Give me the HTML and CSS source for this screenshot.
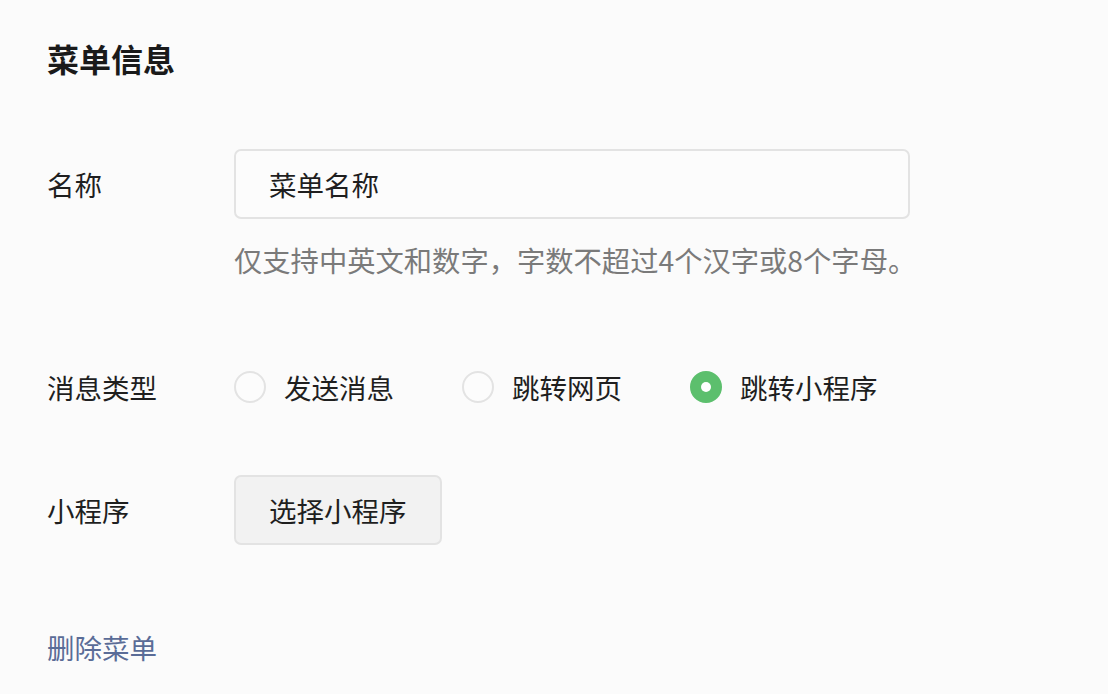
FILE: index.html
```html
<!DOCTYPE html>
<html lang="zh">
<head>
<meta charset="utf-8">
<link rel="stylesheet" href="styles.css">
</head>
<body>
<div class="page">
  <h1 class="title">菜单信息</h1>
  <div class="row row-name">
    <div class="label">名称</div>
    <div class="field">
      <div class="input">菜单名称</div>
      <div class="help">仅支持中英文和数字，字数不超过4个汉字或8个字母。</div>
    </div>
  </div>
  <div class="row row-type">
    <div class="label">消息类型</div>
    <div class="radios">
      <div class="radio"><span class="dot"></span><span>发送消息</span></div>
      <div class="radio"><span class="dot"></span><span>跳转网页</span></div>
      <div class="radio"><span class="dot checked"></span><span>跳转小程序</span></div>
    </div>
  </div>
  <div class="row row-mp">
    <div class="label">小程序</div>
    <div class="field">
      <div class="btn">选择小程序</div>
    </div>
  </div>
  <div class="delete">删除菜单</div>
</div>
</body>
</html>
```

FILE: styles.css
```css
html, body {
  margin: 0;
  padding: 0;
  background: #fbfbfb;
}
body {
  font-family: "Noto Sans CJK SC", "Noto Sans", sans-serif;
  color: #222;
}
.page {
  padding: 37px 47px 0 47px;
}
.title {
  margin: 0;
  font-size: 32px;
  font-weight: 700;
  line-height: 42px;
  color: #1a1a1a;
}
.row {
  display: flex;
  align-items: flex-start;
}
.label {
  width: 187px;
  flex: none;
  font-size: 27.5px;
  line-height: 40px;
  color: #1f1f1f;
}
.row-name {
  margin-top: 70px;
}
.row-name .label {
  margin-top: 15px;
}
.input {
  box-sizing: border-box;
  width: 676px;
  height: 70px;
  border: 2px solid #e3e3e3;
  border-radius: 7px;
  background: #fcfcfc;
  padding: 0 33px;
  font-size: 27.5px;
  line-height: 66px;
  color: #1f1f1f;
}
.help {
  margin-top: 21px;
  font-size: 28.3px;
  line-height: 40px;
  color: #7a7a7a;
  white-space: nowrap;
}
.row-type {
  margin-top: 87px;
}
.radios {
  display: flex;
  align-items: center;
  gap: 68px;
  height: 40px;
}
.radio {
  display: flex;
  align-items: center;
  gap: 18px;
  font-size: 27.5px;
  line-height: 40px;
  color: #1f1f1f;
}
.dot {
  box-sizing: border-box;
  width: 32px;
  height: 32px;
  border-radius: 50%;
  border: 2px solid #e3e3e3;
  background: #fcfcfc;
  display: flex;
  align-items: center;
  justify-content: center;
}
.dot.checked {
  border-color: #5cbf6d;
  background: #5cbf6d;
}
.dot.checked::after {
  content: "";
  width: 10px;
  height: 10px;
  border-radius: 50%;
  background: #fff;
}
.row-mp {
  margin-top: 68px;
}
.row-mp .label {
  margin-top: 15px;
}
.btn {
  box-sizing: border-box;
  display: inline-block;
  height: 70px;
  padding: 0 33px;
  border: 2px solid #e3e3e3;
  border-radius: 7px;
  background: #f2f2f2;
  font-size: 27.5px;
  line-height: 66px;
  color: #1f1f1f;
}
.delete {
  margin-top: 82px;
  font-size: 27.5px;
  line-height: 40px;
  color: #5a6c97;
}
```
